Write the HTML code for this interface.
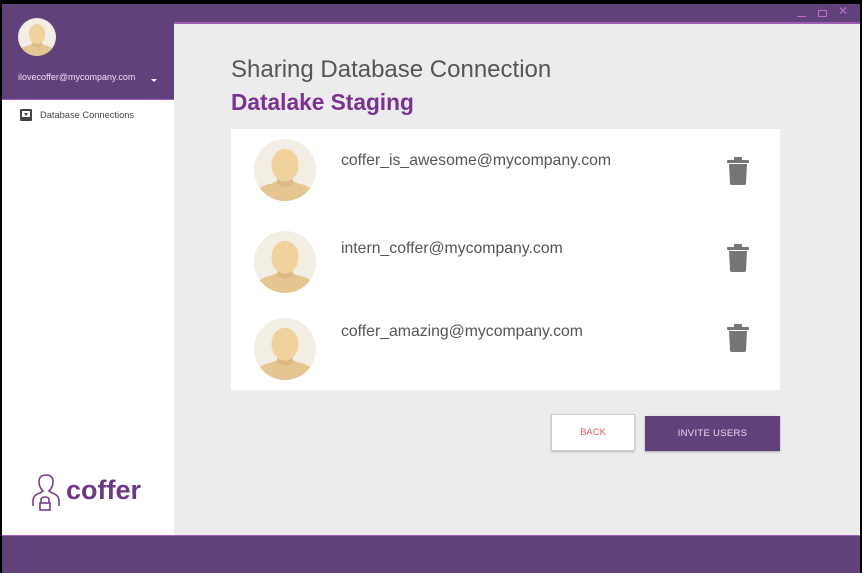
<!DOCTYPE html>
<html><head><meta charset="utf-8"><style>
*{margin:0;padding:0;box-sizing:border-box}
body{width:862px;height:573px;background:#000;position:relative;overflow:hidden;font-family:"Liberation Sans",sans-serif}
.abs{position:absolute}
</style></head><body>
<svg width="0" height="0" style="position:absolute"><defs>
<clipPath id="cc"><circle cx="32" cy="32" r="32"/></clipPath>
<g id="av"><circle cx="32" cy="32" r="32" fill="#f2eee4"/><g clip-path="url(#cc)">
<path d="M-2 64 Q2 48 18 46 L25 43 L39 43 L46 46 Q62 48 66 64 Z" fill="#e5c590"/>
<path d="M24 38 L40 38 L40 46 Q32 52 24 46 Z" fill="#dcb983"/>
<ellipse cx="32" cy="27" rx="14" ry="17" fill="#f0d29c"/></g></g>
<g id="tr"><rect x="0" y="3" width="22" height="3" rx="1" fill="#757575"/><rect x="7" y="0" width="8" height="4" rx="1" fill="#757575"/><path d="M2 7 H20 L19 26 Q19 28 17 28 H5 Q3 28 3 26 Z" fill="#757575"/></g>
</defs></svg>
<div class="abs" style="left:2px;top:4px;width:172px;height:531px;background:#fff;box-shadow:1px 0 3px rgba(0,0,0,.3)"></div>
<div class="abs" style="left:2px;top:4px;width:172px;height:96px;background:#61417a;border-bottom:1px solid #a45fb8"></div>
<svg class="abs" style="left:18px;top:18px" width="38" height="38" viewBox="0 0 64 64"><use href="#av"/></svg>
<div class="abs" style="left:18px;top:72px;font-size:9px;color:#f3dcf7">ilovecoffer@mycompany.com</div>
<div class="abs" style="left:151px;top:79px;width:0;height:0;border-left:3px solid transparent;border-right:3px solid transparent;border-top:3px solid #fff"></div>
<svg class="abs" style="left:20px;top:109px" width="12" height="12" viewBox="0 0 12 12"><rect x="0" y="0" width="12" height="12" rx="1" fill="#444"/><rect x="2" y="2" width="8" height="6" fill="#fff"/><path d="M4 4 H8 L6 7 Z" fill="#444"/></svg>
<div class="abs" style="left:40px;top:110px;font-size:9.3px;color:#444">Database Connections</div>
<svg class="abs" style="left:30px;top:473px" width="35" height="40" viewBox="0 0 35 40"><path d="M3 33 V28 Q3 22 10 20 L13 18 Q9 14 9 9 Q9 2 16 2 Q23 2 23 9 Q23 14 19 18 L22 20 Q29 22 29 28 V33" fill="none" stroke="#7b3a92" stroke-width="1.6"/><path d="M11 30 V27 Q11 24 15 24 Q19 24 19 27 V30" fill="none" stroke="#7b3a92" stroke-width="1.6"/><rect x="10" y="30" width="10" height="7" fill="none" stroke="#7b3a92" stroke-width="1.6"/></svg>
<div class="abs" style="left:66px;top:475px;font-size:27px;font-weight:bold;color:#6b3a86">coffer</div>
<div class="abs" style="left:174px;top:4px;width:686px;height:531px;background:#ececec"></div>
<div class="abs" style="left:174px;top:4px;width:686px;height:20px;background:#61417a;border-bottom:2px solid #9f5cb6"></div>
<div class="abs" style="left:797px;top:16px;width:9px;height:1px;background:#c36ad6"></div>
<div class="abs" style="left:818px;top:10px;width:9px;height:7px;border:1px solid #c36ad6"></div>
<div class="abs" style="left:838px;top:4px;font-size:12px;color:#c36ad6">✕</div>
<div class="abs" style="left:231px;top:56px;font-size:24px;color:#555">Sharing Database Connection</div>
<div class="abs" style="left:231px;top:89px;font-size:22.7px;font-weight:bold;color:#7b3192">Datalake Staging</div>
<div class="abs" style="left:231px;top:129px;width:549px;height:261px;background:#fff"></div>
<svg class="abs" style="left:254px;top:139px" width="62" height="62" viewBox="0 0 64 64"><use href="#av"/></svg>
<svg class="abs" style="left:254px;top:231px" width="62" height="62" viewBox="0 0 64 64"><use href="#av"/></svg>
<svg class="abs" style="left:254px;top:318px" width="62" height="62" viewBox="0 0 64 64"><use href="#av"/></svg>
<div class="abs" style="left:341px;top:152px;font-size:15.8px;color:#555">coffer_is_awesome@mycompany.com</div>
<div class="abs" style="left:341px;top:240px;font-size:15.8px;color:#555">intern_coffer@mycompany.com</div>
<div class="abs" style="left:341px;top:323px;font-size:15.8px;color:#555">coffer_amazing@mycompany.com</div>
<svg class="abs" style="left:727px;top:157px" width="22" height="28"><use href="#tr"/></svg>
<svg class="abs" style="left:727px;top:244px" width="22" height="28"><use href="#tr"/></svg>
<svg class="abs" style="left:727px;top:324px" width="22" height="28"><use href="#tr"/></svg>
<div class="abs" style="left:551px;top:414px;width:84px;height:37px;background:#fff;border:1px solid #ccc;box-shadow:0 1px 2px rgba(0,0,0,.2);text-align:center;line-height:35px;font-size:9.5px;color:#ef5a5a">BACK</div>
<div class="abs" style="left:645px;top:416px;width:135px;height:35px;background:#61417a;box-shadow:0 1px 2px rgba(0,0,0,.3);text-align:center;line-height:35px;font-size:9.5px;color:#f0d8f5;letter-spacing:.3px">INVITE USERS</div>
<div class="abs" style="left:2px;top:535px;width:858px;height:38px;background:#61417a;border-top:1px solid #a45fb8"></div>
</body></html>
